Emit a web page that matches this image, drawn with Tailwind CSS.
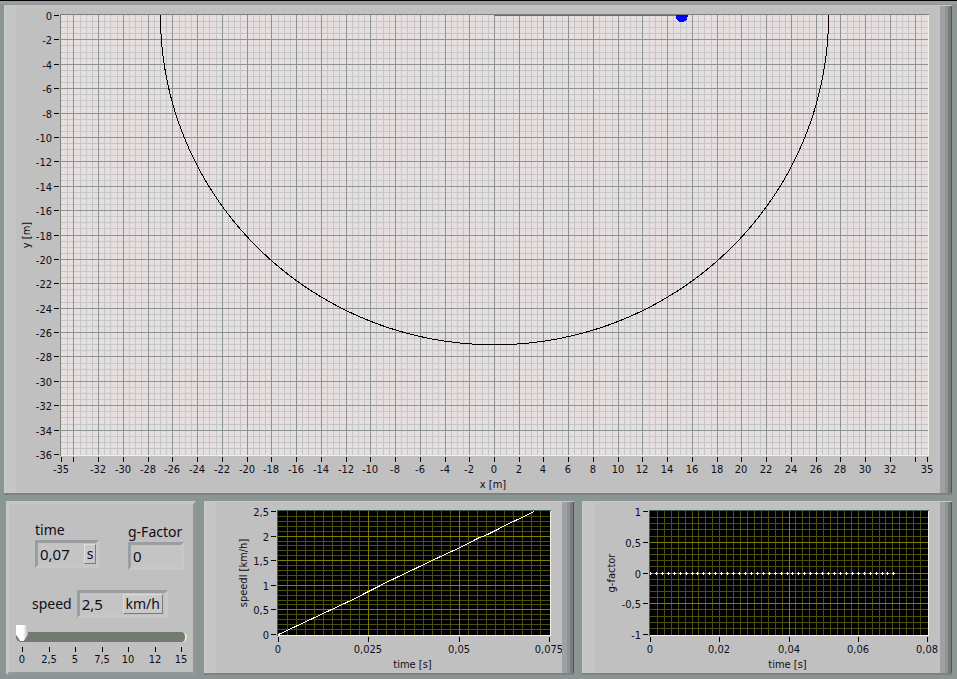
<!DOCTYPE html>
<html lang="en">
<head>
  <meta charset="UTF-8">
  <meta name="viewport" content="width=device-width, initial-scale=1.0">
  <title>Pendulum</title>
  <script src="https://cdn.jsdelivr.net/npm/@tailwindcss/browser@4"></script>
</head>
<body class="min-h-screen flex flex-col bg-[#8b9594] text-[#100c18] font-['Tahoma','DejaVu_Sans_Condensed','Noto_Sans',sans-serif]">
  <header class="h-[5px] shrink-0 bg-[#9f9ca1] border-t border-t-black border-b border-b-[#8b9594]"></header>

  <main class="flex-1 flex flex-col gap-[6px] pb-1 pr-[5px]">
    <!-- Position chart -->
    <section class="ml-1 flex-1 min-h-80 flex bg-[#c0c0c0] border-t border-t-[#c8c8c8] border-b-2 border-b-[#7f8283]">
      <div class="w-3 bg-[#c6c6c6] border-l border-l-[#cccccc]"></div>
      <svg id="positionChart" class="flex-1 min-w-0 w-0" role="img" aria-label="Position"></svg>
      <div class="w-[5px] bg-[#9f9fa4]"></div>
      <div class="w-[3px] bg-[#8b9594]"></div>
      <div class="w-[3px] bg-[#7b7b7b]"></div>
      <div class="w-px bg-[#3c5c5a]"></div>
    </section>

    <div class="flex gap-2 pl-[6px] h-[174px]">
      <!-- Controls -->
      <section class="w-[190px] shrink-0 flex flex-col bg-[#c0c0c0] border-[3px] border-t-[#c8c8c8] border-l-[#c8c8c8] border-r-[#93969a] border-b-[#93969a] text-[14px] leading-5 font-['Noto_Sans',sans-serif]">
        <div class="flex justify-between pl-[26px] pr-[9px] pt-4">
          <div class="flex flex-col">
            <label for="time">time</label>
            <div class="flex w-16 h-7 border-[3px] border-t-[#9a9da1] border-l-[#9a9da1] border-r-[#c8c8c8] border-b-[#c8c8c8] bg-[#c3c4c3]">
              <input id="time" type="text" value="0,07" readonly class="w-0 flex-1 pl-[2px] text-[15px] outline-none">
              <span class="w-3 h-5 mt-px text-center bg-[#cacaca] border border-t-[#dddddd] border-l-[#dddddd] border-r-[#7b7b7b] border-b-[#7b7b7b] leading-[18px]">s</span>
            </div>
          </div>
          <div class="flex flex-col pt-[2px]">
            <label for="gFactor">g-Factor</label>
            <div class="flex w-14 h-7 border-[3px] border-t-[#9a9da1] border-l-[#9a9da1] border-r-[#c8c8c8] border-b-[#c8c8c8] bg-[#c3c4c3]">
              <input id="gFactor" type="text" value="0" readonly class="w-0 flex-1 pl-[2px] text-[15px] outline-none">
            </div>
          </div>
        </div>

        <div class="flex items-center gap-[5px] pl-[23px] pt-5">
          <label for="speed">speed</label>
          <div class="flex w-[91px] h-7 border-[3px] border-t-[#9a9da1] border-l-[#9a9da1] border-r-[#c8c8c8] border-b-[#c8c8c8] bg-[#c3c4c3]">
            <input id="speed" type="text" value="2,5" class="w-0 flex-1 pl-[2px] text-[15px] outline-none">
            <button type="button" class="w-10 h-5 mt-px mr-[2px] text-center bg-[#cacaca] border border-t-[#dddddd] border-l-[#dddddd] border-r-[#7b7b7b] border-b-[#7b7b7b] leading-[18px]">km/h</button>
          </div>
        </div>

        <div class="pl-[7px] pr-[6px] pt-2">
          <input id="speedSlider" type="range" min="0" max="15" step="0.5" value="0" aria-label="speed"
            class="block w-full h-[18px] appearance-none bg-transparent [&::-webkit-slider-runnable-track]:h-[10px] [&::-webkit-slider-runnable-track]:mt-1 [&::-webkit-slider-runnable-track]:rounded-full [&::-webkit-slider-runnable-track]:bg-[#727b70] [&::-webkit-slider-runnable-track]:border-r-2 [&::-webkit-slider-runnable-track]:border-r-[#e4e4e4] [&::-webkit-slider-thumb]:appearance-none [&::-webkit-slider-thumb]:w-3 [&::-webkit-slider-thumb]:h-4 [&::-webkit-slider-thumb]:-mt-[7px] [&::-webkit-slider-thumb]:bg-linear-to-r [&::-webkit-slider-thumb]:from-white [&::-webkit-slider-thumb]:from-60% [&::-webkit-slider-thumb]:to-[#b5b5b5] [&::-webkit-slider-thumb]:[clip-path:polygon(0_0,100%_0,100%_60%,65%_100%,35%_100%,0_60%)]">
          <svg id="sliderScale" class="block w-full h-6 font-['Tahoma','DejaVu_Sans_Condensed',sans-serif]" aria-hidden="true"></svg>
        </div>
      </section>

      <!-- Speed chart -->
      <section class="flex-1 min-w-0 flex bg-[#c0c0c0] border-t border-t-[#c8c8c8] border-b-2 border-b-[#7f8283]">
        <div class="w-3 bg-[#c6c6c6] border-l border-l-[#cccccc]"></div>
        <svg id="speedChart" class="flex-1 min-w-0 w-0" role="img" aria-label="Speed"></svg>
        <div class="w-[5px] bg-[#9f9fa4]"></div>
        <div class="w-[3px] bg-[#8b9594]"></div>
        <div class="w-[3px] bg-[#7b7b7b]"></div>
        <div class="w-px bg-[#3c5c5a]"></div>
      </section>

      <!-- g-factor chart -->
      <section class="flex-1 min-w-0 flex bg-[#c0c0c0] border-t border-t-[#c8c8c8] border-b-2 border-b-[#7f8283]">
        <div class="w-3 bg-[#c6c6c6] border-l border-l-[#cccccc]"></div>
        <svg id="gChart" class="flex-1 min-w-0 w-0" role="img" aria-label="g-factor"></svg>
        <div class="w-[5px] bg-[#9f9fa4]"></div>
        <div class="w-[3px] bg-[#8b9594]"></div>
        <div class="w-[3px] bg-[#7b7b7b]"></div>
        <div class="w-px bg-[#3c5c5a]"></div>
      </section>
    </div>
  </main>

<script>
  const SVG_NS = 'http://www.w3.org/2000/svg';

  function add(parent, tag, attrs, text) {
    const el = document.createElementNS(SVG_NS, tag);
    for (const key in attrs) el.setAttribute(key, attrs[key]);
    if (text !== undefined) el.textContent = text;
    parent.appendChild(el);
    return el;
  }

  function range(from, to, step) {
    const out = [];
    for (let i = 0; from + i * step <= to + step / 100; i++) out.push(from + i * step);
    return out;
  }

  // decimal comma
  function format(value) {
    return String(Math.round(value * 1000) / 1000).replace('.', ',');
  }

  function rect(svg, x, y, width, height, fill) {
    add(svg, 'rect', { x, y, width, height, fill });
  }

  function label(svg, x, y, text, anchor) {
    add(svg, 'text', { x, y, 'text-anchor': anchor || 'middle', class: 'text-[11px] fill-[#100c18]' }, text);
  }

  function drawChart(id, c) {
    const svg = document.getElementById(id);
    const box = svg.getBoundingClientRect();
    svg.replaceChildren();

    const left = c.left, top = 9;
    const right = Math.round(box.width) - 13;
    const bottom = Math.round(box.height) - c.bottom;
    const px = v => left + (v - c.x[0]) / (c.x[1] - c.x[0]) * (right - left);
    const py = v => top + (c.y[1] - v) / (c.y[1] - c.y[0]) * (bottom - top);
    const w = right - left + 1, h = bottom - top + 1;
    if (w < 10 || h < 10) return;

    // plot area with sunken edge
    rect(svg, left - 1, top - 1, w + 2, h + 2, c.edge);
    rect(svg, left, bottom + 1, w + 1, 1, '#f4f0e8');
    rect(svg, right + 1, top, 1, h + 1, '#f4f0e8');
    rect(svg, left, top, w, h, c.background);

    // grid
    c.minorX.forEach(v => rect(svg, Math.round(px(v)), top, 1, h, c.minor));
    c.minorY.forEach(v => rect(svg, left, Math.round(py(v)), w, 1, c.minor));
    c.majorX.forEach(v => rect(svg, Math.round(px(v)), top, 1, h, c.major));
    c.majorY.forEach(v => rect(svg, left, Math.round(py(v)), w, 1, c.major));

    // scales
    c.ticksX.forEach(v => {
      const x = Math.round(px(v));
      rect(svg, x, bottom + 3, 1, 5, '#000000');
      if (!c.unlabelled || !c.unlabelled.includes(v)) label(svg, x, bottom + 19, format(v));
    });
    c.ticksY.forEach(v => {
      const y = Math.round(py(v));
      rect(svg, left - 7, y, 5, 1, '#000000');
      label(svg, left - 9, y + 5, format(v), 'end');
    });
    label(svg, (left + right) / 2 - 1, bottom + 34, c.titleX);
    add(svg, 'text', {
      x: 0, y: 0, 'text-anchor': 'middle', class: 'text-[11px] fill-[#100c18]',
      transform: `translate(${c.titleLeft} ${Math.round((top + bottom) / 2)}) rotate(-90)`
    }, c.titleY);

    // data, clipped to the plot
    const clip = add(svg, 'clipPath', { id: id + 'Clip' });
    rect(clip, left, top, w, h, '#000000');
    c.draw(add(svg, 'g', { 'clip-path': `url(#${id}Clip)` }), px, py);
  }

  function polyline(g, points, px, py, stroke) {
    add(g, 'polyline', {
      points: points.map(p => (px(p[0]) + 0.5) + ',' + (py(p[1]) + 0.5)).join(' '),
      fill: 'none', stroke, 'shape-rendering': 'crispEdges'
    });
  }

  const speedData = [[0, 0], [0.0194, 0.67], [0.0216, 0.75], [0.031, 1.1], [0.0453, 1.6],
    [0.0503, 1.77], [0.0553, 1.96], [0.0578, 2.03], [0.0637, 2.25], [0.0654, 2.31], [0.0708, 2.5]];

  function drawAll() {
    drawChart('positionChart', {
      left: 45, bottom: 39, x: [-35, 35], y: [-36, 0],
      background: '#e7dfdf', edge: '#7b807c', minor: '#c3c6c5', major: '#8a9490',
      minorX: range(-34.5, 34.5, 0.5), minorY: range(-35.5, -0.5, 0.5),
      majorX: range(-34, 34, 2), majorY: range(-34, -2, 2),
      ticksX: [-35, ...range(-34, 34, 2), 35], ticksY: range(-36, 0, 2), unlabelled: [-34, 34],
      titleX: 'x [m]', titleY: 'y [m]', titleLeft: 14,
      draw(g, px, py) {
        const arc = range(180, 360, 1).map(a => [27 * Math.cos(a * Math.PI / 180), 27 * Math.sin(a * Math.PI / 180)]);
        polyline(g, arc, px, py, '#000000');
        rect(g, Math.round(px(0)), Math.round(py(0)), Math.round(px(15) - px(0)), 1, '#20a030');
        add(g, 'circle', { cx: px(15.1) + 1, cy: py(0) + 1, r: 6, fill: '#0000ff', 'shape-rendering': 'crispEdges' });
      }
    });

    drawChart('speedChart', {
      left: 62, bottom: 39, x: [0, 0.075], y: [0, 2.5],
      background: '#000000', edge: '#3c5c5a', minor: '#4f4f0c', major: '#808000',
      minorX: range(0.0025, 0.0725, 0.0025), minorY: range(0.1, 2.4, 0.1),
      majorX: [0.025, 0.05], majorY: range(0.5, 2, 0.5),
      ticksX: range(0, 0.075, 0.025), ticksY: range(0, 2.5, 0.5),
      titleX: 'time [s]', titleY: 'speedl [km/h]', titleLeft: 31,
      draw(g, px, py) {
        polyline(g, speedData, px, py, '#ffffff');
      }
    });

    drawChart('gChart', {
      left: 56, bottom: 39, x: [0, 0.08], y: [-1, 1],
      background: '#000000', edge: '#3c5c5a', minor: '#4f4f0c', major: '#808000',
      minorX: range(0.002, 0.078, 0.002), minorY: range(-0.9, 0.9, 0.1),
      majorX: [0.04], majorY: [-0.5, 0, 0.5],
      ticksX: range(0, 0.08, 0.02), ticksY: range(-1, 1, 0.5),
      titleX: 'time [s]', titleY: 'g-factor', titleLeft: 21,
      draw(g, px, py) {
        for (let i = 0; i < 42; i++) {
          const x = Math.round(px(i * 0.0703 / 41)), y = Math.round(py(0));
          rect(g, x - 1, y, 3, 1, '#ffffff');
          rect(g, x, y - 1, 1, 3, '#ffffff');
        }
      }
    });

    // slider scale
    const scale = document.getElementById('sliderScale');
    const width = scale.getBoundingClientRect().width;
    scale.replaceChildren();
    ['0', '2,5', '5', '7,5', '10', '12', '15'].forEach((text, i) => {
      const x = Math.round(6 + i * (width - 12) / 6);
      rect(scale, x, 3, 1, 5, '#000000');
      label(scale, x, 19, text);
    });
  }

  // redraw whenever a chart gets a new size
  const observer = new ResizeObserver(drawAll);
  document.querySelectorAll('main svg').forEach(svg => observer.observe(svg));
  window.addEventListener('load', drawAll);
  drawAll();
</script>
</body>
</html>
